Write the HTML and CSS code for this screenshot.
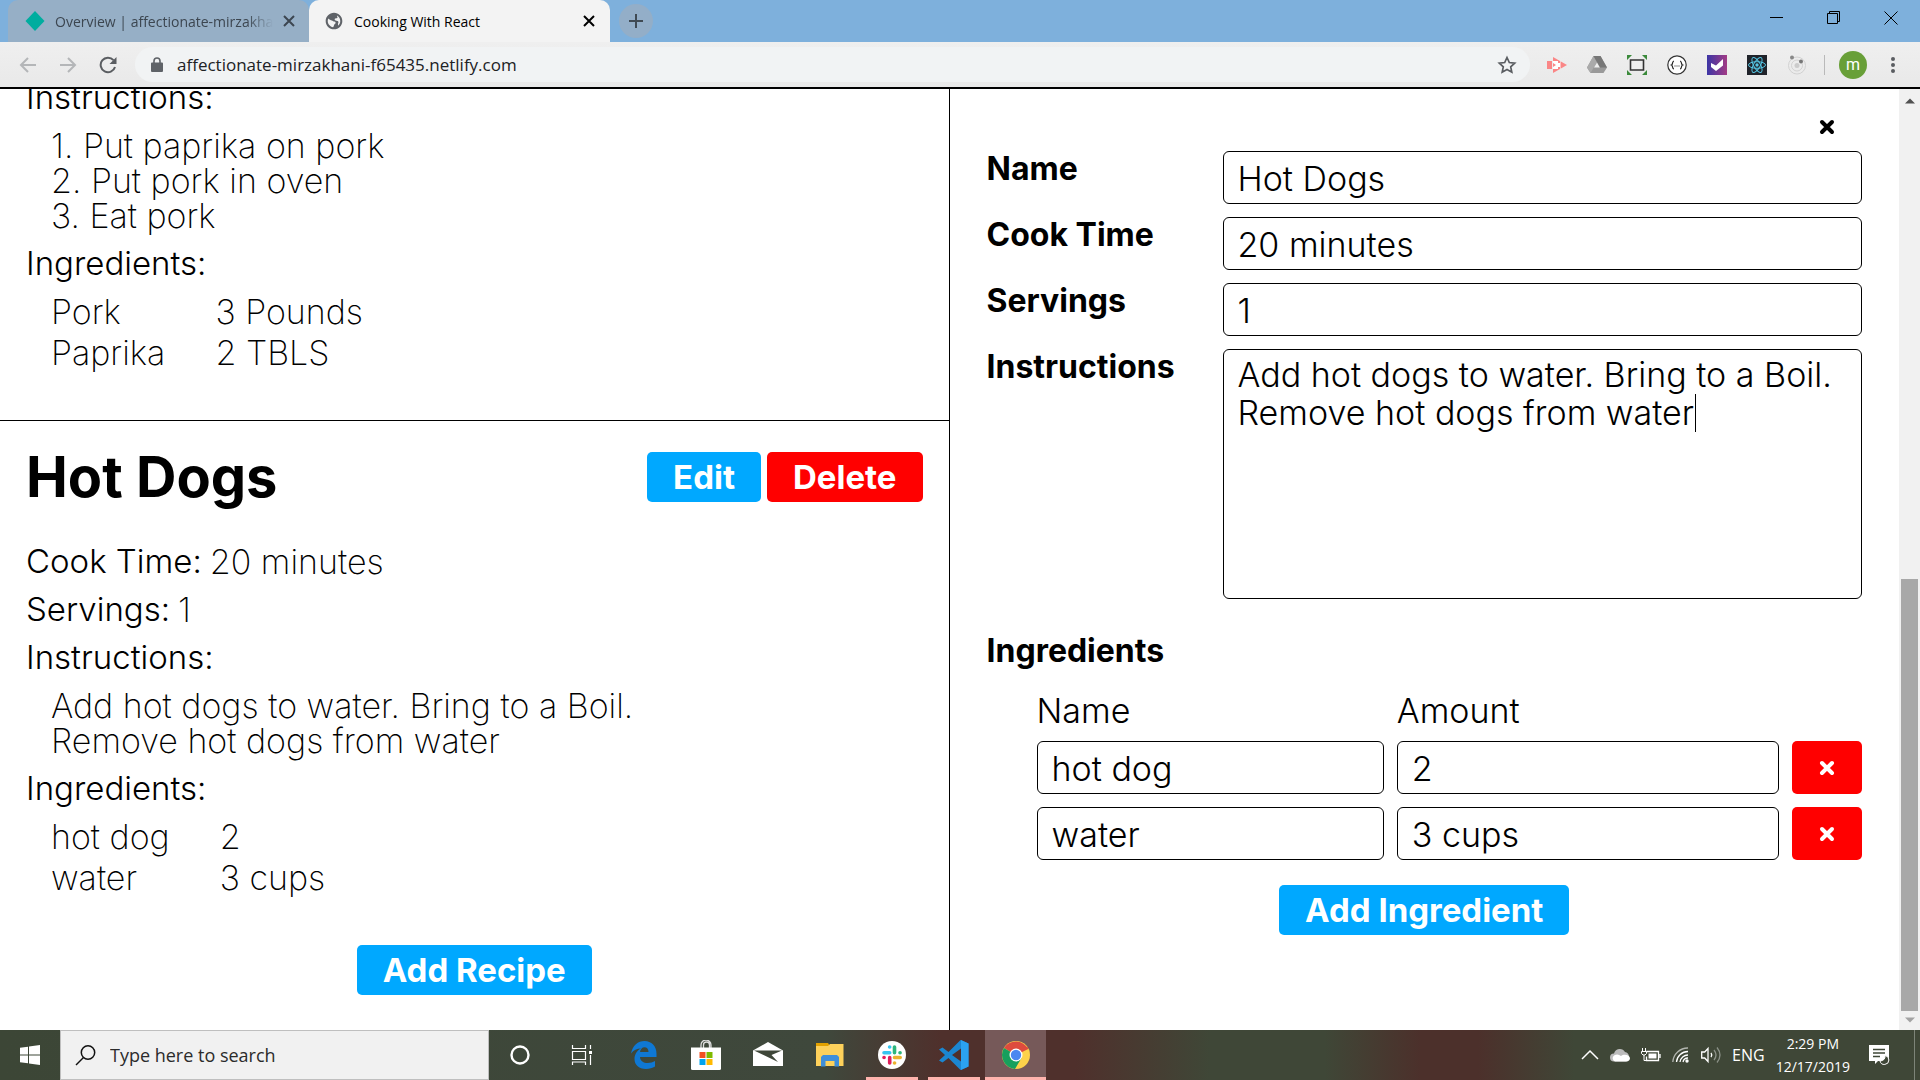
FILE: index.html
```html
<!DOCTYPE html>
<html lang="en">
<head>
<meta charset="utf-8">
<title>Cooking With React</title>
<link rel="stylesheet" href="styles.css">
</head>
<body>
<div class="screen">
  <header class="tabstrip">
    <button class="tab" type="button">
      <svg class="favicon" viewBox="0 0 20 20"><path d="M10 0l9.500 10L10 20 .5 10z" fill="#00ad9f"/></svg>
      <span class="tab-title tab-title-fade">Overview | affectionate-mirzakhani</span>
      <svg class="tab-close" viewBox="0 0 12 12"><path d="M1 1l10 10M11 1L1 11" stroke="currentColor" stroke-width="2"/></svg>
    </button>
    <button class="tab tab-active" type="button">
      <svg class="favicon" viewBox="0 0 24 24"><path fill="#5f6368" d="M12 2C6.480 2 2 6.480 2 12s4.480 10 10 10 10-4.480 10-10S17.520 2 12 2zM4.500 12c0-1 .2-2 .6-2.900C6.500 10.500 8 11 9.500 11.500c1 .3 1.200 1 2.200 1.200 1 .2 2.200.2 2.200 1.300 0 1.200-1.200 1.500-1.700 2.500-.4.900-.2 2-1.300 2.900C7.300 18.900 4.500 15.800 4.500 12zm12.300 5.700c.3-1.300-.3-2.200.3-3.200.5-.9.300-1.700-.6-2.400-.8-.6-2.200-.4-3.200-1.100-.8-.6-.6-1.600.2-2 1.100-.5 2.600.2 2.700-1.200.1-1-.9-1.300-.6-2.300 2.300 1.200 3.900 3.700 3.900 6.500 0 2.300-1 4.300-2.700 5.700z"/></svg>
      <span class="tab-title">Cooking With React</span>
      <svg class="tab-close" viewBox="0 0 12 12"><path d="M1 1l10 10M11 1L1 11" stroke="currentColor" stroke-width="2"/></svg>
    </button>
    <button class="new-tab" type="button" aria-label="New tab"><svg width="16" height="16" viewBox="0 0 16 16"><path d="M8 1v14M1 8h14" stroke="#3f4a54" stroke-width="2"/></svg></button>
    <div class="window-controls">
      <button type="button" aria-label="Minimize"><svg width="14" height="14" viewBox="0 0 14 14"><path d="M0 6.500h13" stroke="#000"/></svg></button>
      <button type="button" aria-label="Restore"><svg width="14" height="14" viewBox="0 0 14 14"><path d="M.5 2.500h10v10H.5zM2.500 2.500v-2h10v10h-2" fill="none" stroke="#000"/></svg></button>
      <button type="button" aria-label="Close"><svg width="14" height="14" viewBox="0 0 14 14"><path d="M.5.5l13 13M13.500.5l-13 13" stroke="#000"/></svg></button>
    </div>
  </header>

  <nav class="toolbar">
    <button class="nav-button" type="button" aria-label="Back"><svg width="18" height="18" viewBox="0 0 18 18"><path d="M17 9H2M9 2L2 9l7 7" fill="none" stroke="#b4b6b8" stroke-width="2"/></svg></button>
    <button class="nav-button" type="button" aria-label="Forward"><svg width="18" height="18" viewBox="0 0 18 18"><path d="M1 9h15M9 2l7 7-7 7" fill="none" stroke="#b4b6b8" stroke-width="2"/></svg></button>
    <button class="nav-button" type="button" aria-label="Reload"><svg width="18" height="18" viewBox="0 0 18 18"><path d="M14.500 4.200A7.300 7.300 0 1 0 16 11" fill="none" stroke="#5a5d61" stroke-width="2"/><path d="M17.500 1v7h-7z" fill="#5a5d61"/></svg></button>
    <div class="omnibox">
      <svg width="12" height="16" viewBox="0 0 12 16"><path d="M1 5.500h10a1 1 0 0 1 1 1V14a1 1 0 0 1-1 1H1a1 1 0 0 1-1-1V6.500a1 1 0 0 1 1-1z" fill="#5f6368"/><path d="M3 6V4a3 3 0 0 1 6 0v2" fill="none" stroke="#5f6368" stroke-width="1.600"/></svg>
      <input class="url" type="text" aria-label="Address" value="affectionate-mirzakhani-f65435.netlify.com">
      <svg width="20" height="20" viewBox="0 0 20 20"><path d="M10 2.500l2.300 5 5.400.6-4 3.700 1.100 5.400L10 14.500l-4.800 2.700 1.100-5.400-4-3.700 5.400-.6z" fill="none" stroke="#5a5d61" stroke-width="1.700"/></svg>
    </div>
    <div class="extensions">
      <button type="button" aria-label="Screen recorder"><svg width="20" height="20" viewBox="0 0 20 20"><path d="M0 6h5v8H0zM6 2l14 8-14 8z" fill="#fa8686"/><path d="M6 6h7.500v8H6z" fill="#fff"/><path d="M6 8l3 2-3 2zM11 6h2v2h-2zM11 12h2v2h-2z" fill="#fa8686"/></svg></button>
      <button type="button" aria-label="Drive"><svg width="20" height="20" viewBox="0 0 20 20"><path d="M6.500 1h7L20 12.500 16.500 18h-13L0 12.500z" fill="#999"/><path d="M6.500 1L0 12.500 3.500 18 10 7z" fill="#aaa"/><path d="M13.500 1H6.500l6.500 11.500h7z" fill="#777"/><path d="M10 7.500l2.800 5H7z" fill="#eee"/></svg></button>
      <button type="button" aria-label="Full page capture"><svg width="20" height="20" viewBox="0 0 20 20"><path d="M0 0h5L0 5zM20 0v5l-5-5zM0 20v-5l5 5zM20 20h-5l5-5z" fill="#3b8a3b"/><path d="M3.500 5h13v10h-13z" fill="#eee" stroke="#333" stroke-width="1.600"/></svg></button>
      <button type="button" aria-label="JSON viewer"><svg width="20" height="20" viewBox="0 0 20 20"><circle cx="10" cy="10" r="9.200" fill="#fff" stroke="#333" stroke-width="1.200"/><path d="M7 6c-2 0-1 3.500-2.500 4C6 10.500 5 14 7 14M13 6c2 0 1 3.500 2.500 4-1.500.5-.5 4-2.500 4M7.500 11h1m1 0h1m1 0h1" fill="none" stroke="#222" stroke-width="1.200"/></svg></button>
      <button type="button" aria-label="Tasks"><svg width="20" height="20" viewBox="0 0 20 20"><defs><linearGradient id="pv"><stop stop-color="#3c35a5"/><stop offset="1" stop-color="#a23b85"/></linearGradient></defs><path d="M0 0h20v20H0z" fill="url(#pv)"/><path d="M4 8l5 2.500L16 4v6.500L9 16l-5-4z" fill="#fff"/></svg></button>
      <button type="button" aria-label="React tools"><svg width="20" height="20" viewBox="0 0 20 20"><path d="M0 0h20v20H0z" fill="#20232a"/><g fill="none" stroke="#55c5e3"><ellipse cx="10" cy="10" rx="8.500" ry="3.300"/><ellipse cx="10" cy="10" rx="8.500" ry="3.300" transform="rotate(60 10 10)"/><ellipse cx="10" cy="10" rx="8.500" ry="3.300" transform="rotate(120 10 10)"/></g><circle cx="10" cy="10" r="1.700" fill="#55c5e3"/></svg></button>
      <button type="button" aria-label="Orbit"><svg width="20" height="20" viewBox="0 0 20 20"><circle cx="10" cy="10.500" r="8.500" fill="none" stroke="#d2d2d2"/><circle cx="10" cy="10.500" r="5.500" fill="none" stroke="#d2d2d2"/><circle cx="10" cy="10.500" r="2.500" fill="#ccc"/><circle cx="5" cy="2.500" r="2" fill="#888"/><circle cx="14" cy="6.500" r="2" fill="#777"/></svg></button>
    </div>
    <span class="toolbar-divider"></span>
    <button class="avatar" type="button">m</button>
    <button class="menu" type="button" aria-label="Menu"><svg width="4" height="16" viewBox="0 0 4 16"><g fill="#5a5d61"><circle cx="2" cy="2" r="2"/><circle cx="2" cy="8" r="2"/><circle cx="2" cy="14" r="2"/></g></svg></button>
  </nav>

  <main class="app">
    <section class="recipe-list">
      <article class="recipe">
        <div class="recipe-body">
          <h3 class="term">Instructions:</h3>
          <p class="instructions">1. Put paprika on pork<br>2. Put pork in oven<br>3. Eat pork</p>
          <h3 class="term">Ingredients:</h3>
          <table class="ingredients">
            <tr><td>Pork</td><td>3 Pounds</td></tr>
            <tr><td>Paprika</td><td>2 TBLS</td></tr>
          </table>
        </div>
      </article>
      <article class="recipe">
        <div class="recipe-header">
          <h2 class="recipe-title">Hot Dogs</h2>
          <div class="recipe-actions">
            <button class="btn btn-primary" type="button">Edit</button>
            <button class="btn btn-danger" type="button">Delete</button>
          </div>
        </div>
        <div class="recipe-body">
          <p class="fact"><span class="term">Cook Time:</span><span>20 minutes</span></p>
          <p class="fact"><span class="term">Servings:</span><span>1</span></p>
          <h3 class="term">Instructions:</h3>
          <p class="instructions">Add hot dogs to water. Bring to a Boil.<br>Remove hot dogs from water</p>
          <h3 class="term">Ingredients:</h3>
          <table class="ingredients">
            <tr><td>hot dog</td><td>2</td></tr>
            <tr><td>water</td><td>3 cups</td></tr>
          </table>
        </div>
      </article>
      <div class="list-footer"><button class="btn btn-primary" type="button">Add Recipe</button></div>
    </section>

    <form class="editor">
      <div class="editor-top"><button class="editor-close" type="button" aria-label="Close editor"><svg width="16" height="16" viewBox="0 0 16 16"><path d="M3 3l10 10M13 3L3 13" stroke="currentColor" stroke-width="4" stroke-linecap="round"/></svg></button></div>
      <div class="fields">
        <label for="name">Name</label>
        <input class="box" id="name" type="text" value="Hot Dogs">
        <label for="cook">Cook Time</label>
        <input class="box" id="cook" type="text" value="20 minutes">
        <label for="servings">Servings</label>
        <input class="box" id="servings" type="text" value="1">
        <label for="instructions">Instructions</label>
        <div class="area">
          <textarea class="box" id="instructions">Add hot dogs to water. Bring to a Boil.
Remove hot dogs from water</textarea>
          <span class="caret"></span>
        </div>
      </div>
      <h3 class="editor-heading">Ingredients</h3>
      <div class="ingredient-grid">
        <span>Name</span><span>Amount</span><span></span>
        <input class="box" type="text" aria-label="Ingredient name" value="hot dog">
        <input class="box" type="text" aria-label="Ingredient amount" value="2">
        <button class="remove" type="button" aria-label="Remove hot dog"><svg width="16" height="16" viewBox="0 0 16 16"><path d="M3 3l10 10M13 3L3 13" stroke="currentColor" stroke-width="4" stroke-linecap="round"/></svg></button>
        <input class="box" type="text" aria-label="Ingredient name" value="water">
        <input class="box" type="text" aria-label="Ingredient amount" value="3 cups">
        <button class="remove" type="button" aria-label="Remove water"><svg width="16" height="16" viewBox="0 0 16 16"><path d="M3 3l10 10M13 3L3 13" stroke="currentColor" stroke-width="4" stroke-linecap="round"/></svg></button>
      </div>
      <div class="editor-footer"><button class="btn btn-primary" type="button">Add Ingredient</button></div>
    </form>

    <div class="scrollbar">
      <svg width="10" height="6" viewBox="0 0 10 6"><path d="M0 5.500L5 .5l5 5z" fill="#505050"/></svg>
      <div class="scroll-track"><div class="scroll-thumb"></div></div>
      <svg width="10" height="6" viewBox="0 0 10 6"><path d="M0 .5l5 5 5-5z" fill="#a3a3a3"/></svg>
    </div>
  </main>

  <footer class="taskbar">
    <button class="start" type="button" aria-label="Start"><svg width="20" height="20" viewBox="0 0 20 20"><path d="M0 2.800L8 1.700V9.500H0zM9 1.500L20 0v9.500H9zM0 10.500h8v7.800L0 17.200zM9 10.500h11V20L9 18.500z" fill="#fff"/></svg></button>
    <label class="search">
      <svg width="21" height="21" viewBox="0 0 21 21"><circle cx="13" cy="7.500" r="6.700" fill="none" stroke="#111" stroke-width="1.500"/><path d="M8.500 12.500L1 20" stroke="#111" stroke-width="1.500"/></svg>
      <input type="text" aria-label="Search" placeholder="Type here to search">
    </label>
    <div class="apps">
      <button type="button" aria-label="Cortana"><svg width="22" height="22" viewBox="0 0 22 22"><circle cx="11" cy="11" r="8.500" fill="none" stroke="#fff" stroke-width="2.400"/></svg></button>
      <button type="button" aria-label="Task view"><svg width="22" height="22" viewBox="0 0 22 22"><path d="M1.500 1v3.500h13V1M1.500 7.500h13v8h-13zM1.500 21v-3h13v3M19.500 1v4M19.500 11v10" fill="none" stroke="#fff" stroke-width="1.200"/><path d="M18 7h3v3h-3z" fill="#fff"/></svg></button>
      <button type="button" aria-label="Edge"><svg width="26" height="28" viewBox="0 0 26 28"><path d="M0 12.500C1.500 4.500 7 0 13.500 0 20.500 0 25.500 5 25.500 12.500V16H9c.3 4 3.600 6 7.500 6 3 0 5.500-.8 7.500-2v5.500C21.500 27 18.500 28 15 28 7.500 28 3.500 23.500 3.500 18c0-4.500 2.500-8.500 6.500-10.500-4 .2-7.500 1.500-10 5zm9-1.500h8.500c0-3-1.500-4.800-4-4.800S9.300 8.300 9 11z" fill="#0f78d4"/></svg></button>
      <button type="button" aria-label="Store"><svg width="30" height="30" viewBox="0 0 30 30"><path d="M10 8V5a4 4 0 0 1 10 0v3M12.500 8V5a3 3 0 0 1 6 0v3" fill="none" stroke="#ddd" stroke-width="1.300"/><path d="M0 7.500h30V28.500a1.500 1.500 0 0 1-1.500 1.500h-27A1.500 1.500 0 0 1 0 28.500z" fill="#fff"/><path d="M8.500 12h6v6h-6z" fill="#f25022"/><path d="M15.500 12h6v6h-6z" fill="#7fba00"/><path d="M8.500 19h6v6h-6z" fill="#00a4ef"/><path d="M15.500 19h6v6h-6z" fill="#ffb900"/></svg></button>
      <button type="button" aria-label="Mail"><svg width="30" height="26" viewBox="0 0 30 26"><path d="M0 8.500L15 0l15 8.500V24H0z" fill="#fff"/><path d="M1 8.500h28L18.500 13l6.500 7z" fill="#3e4638"/></svg></button>
      <button type="button" aria-label="File Explorer"><svg width="28" height="24" viewBox="0 0 28 24"><path d="M0 0h12l2 3H0z" fill="#e2a100"/><path d="M0 3h12l2-2h13.500v22H0z" fill="#fdd15b"/><path d="M5 23v-9l2-2h14l2 2v9.500h-4.500V18h-9v5.500H5z" fill="#3f8fd9"/></svg></button>
      <button class="running" type="button" aria-label="Slack"><svg width="28" height="28" viewBox="0 0 28 28"><circle cx="14" cy="14" r="14" fill="#fff"/><g stroke-width="3.600" stroke-linecap="round"><path d="M6 11.700h5.700M11.600 6h.1" stroke="#36c5f0"/><path d="M16.500 6v5.700M22 11.700h.1" stroke="#2eb67d"/><path d="M16.500 16.500h5.700M16.500 22h.1" stroke="#ecb22e"/><path d="M11.700 16.500V22M6 16.500h.1" stroke="#e01e5a"/></g></svg></button>
      <button class="running" type="button" aria-label="VS Code"><svg width="30" height="30" viewBox="0 0 30 30"><path d="M21.500 0L9.500 12 3.500 7.500 0 9.500 6 15l-6 5.500 3.500 2L9.500 18l12 12 8-3.500v-23zM22 8.500v13L13 15z" fill="#1b86d1" fill-rule="evenodd"/><path d="M22 0l7.500 3.500v23L22 30z" fill="#2ba2f0"/></svg></button>
      <button class="running current" type="button" aria-label="Chrome"><svg width="28" height="28" viewBox="0 0 28 28"><circle cx="14" cy="14" r="14" fill="#fdd24b"/><path d="M14 14L2 7a14 14 0 0 1 24.200 1z" fill="#dd4b3e"/><path d="M14 14L1.900 7A14 14 0 0 0 13 28l6.500-11z" fill="#17a05d"/><path d="M14 8h12.500l-1-2L14 7z" fill="#dd4b3e"/><circle cx="14" cy="14" r="6.500" fill="#fff"/><circle cx="14" cy="14" r="5.200" fill="#4a87f0"/></svg></button>
    </div>
    <div class="tray">
      <svg width="18" height="30" viewBox="0 0 18 30"><path d="M1 19l8-8 8 8" fill="none" stroke="#fff" stroke-width="1.500"/></svg>
      <svg width="20" height="14" viewBox="0 0 20 14"><path d="M4 13.500a4 4 0 0 1 0-8 6 6 0 0 1 11-1.500 5 5 0 0 1 1 9.500z" fill="#bbb"/><path d="M5 13.500a3.500 3.500 0 0 1-1-6c3-2 5-1 7 .5 2-2 8-2 9 2a3.500 3.500 0 0 1-3 3.500z" fill="#fff"/></svg>
      <svg width="20" height="14" viewBox="0 0 20 14"><path d="M5.500 3.500h12v9h-12v-4M19 6v4" fill="none" stroke="#fff" stroke-width="1.300"/><path d="M7.500 5.500h8v5h-8z" fill="#fff"/><path d="M1.500 0v3M4.500 0v3M.5 3.500h5v2l-1.500 1.500h-2L.5 5.500zM3 7v5.500h3" fill="none" stroke="#fff"/></svg>
      <svg width="18" height="18" viewBox="0 0 18 18"><g fill="none" stroke="#fff" stroke-width="1.300"><path d="M.8 16A15 15 0 0 1 16 2" opacity=".6"/><path d="M4.500 16A11.500 11.500 0 0 1 16 5.500M8 16a8 8 0 0 1 8-7"/><path d="M11 16a5 5 0 0 1 5-4"/></g><circle cx="15" cy="15" r="1.700" fill="#fff"/></svg>
      <svg width="20" height="18" viewBox="0 0 20 18"><path d="M.7 6h3L7 2.500v13L3.700 12h-3z" fill="none" stroke="#fff" stroke-width="1.300"/><path d="M10 7q1.500 2 0 4" fill="none" stroke="#fff" stroke-width="1.300"/><path d="M13 4q4 5 0 10M16 1.500q6 7.500 0 15" fill="none" stroke="#8b9188" stroke-width="1.300"/></svg>
      <span class="lang">ENG</span>
      <div class="clock"><span>2:29 PM</span><span>12/17/2019</span></div>
      <svg class="notice" width="21" height="21" viewBox="0 0 21 21"><path d="M0 0h20v16H9l-3 3v-3H0z" fill="#fff"/><path d="M4 4.500h12M4 8h12M4 11.500h7" stroke="#3f4737" stroke-width="1.300"/><path d="M16 10.500q.5 5-5 5.500a4.500 4.500 0 1 0 5-5.500z" fill="#3f4737" stroke="#fff"/></svg>
      <span class="show-desktop"></span>
    </div>
  </footer>
</div>
</body>
</html>
```
FILE: styles.css
```css
* { box-sizing: border-box; }

body {
  margin: 0;
  font-family: "Open Sans", "Noto Sans", sans-serif;
  color: #000;
}

button, input, textarea {
  margin: 0;
  padding: 0;
  border: 0;
  background: none;
  font: inherit;
  color: inherit;
}

button { display: flex; align-items: center; justify-content: center; }
input, textarea { outline: 0; min-width: 0; }
svg { display: block; flex: none; }
h2, h3, p { margin: 0; }

.screen {
  display: flex;
  flex-direction: column;
  height: 100vh;
  overflow: hidden;
}

/* Browser tabs */
.tabstrip {
  display: flex;
  flex: none;
  height: 42px;
  padding: 0 1px 0 8px;
  background: #7eb0dc;
}

.tab {
  flex: none;
  width: 301px;
  gap: 10px;
  padding: 0 14px 0 17px;
  border-radius: 10px 10px 0 0;
  background: #96afc6;
  color: #3c4650;
  font-size: 14px;
}

.tab-active { padding: 0 15px; background: #f3f3f3; color: #000; }
.favicon { width: 20px; height: 20px; }
.tab-title { flex: 1; overflow: hidden; white-space: nowrap; text-align: left; }
.tab-title-fade { mask-image: linear-gradient(90deg, #000 88%, transparent); }
.tab-close { width: 12px; height: 12px; }

.new-tab {
  width: 34px;
  height: 34px;
  margin: 4px 0 0 9px;
  border-radius: 50%;
  background: #93aec8;
}

.window-controls { display: flex; margin-left: auto; height: 36px; }
.window-controls button { width: 57px; }

/* Address bar */
.toolbar {
  display: flex;
  flex: none;
  align-items: center;
  height: 47px;
  padding: 0 25px 0 8px;
  border-bottom: 2px solid #000;
  background: linear-gradient(#efefef, #e9e9e9);
}

.nav-button { width: 40px; height: 40px; }

.omnibox {
  display: flex;
  flex: 1;
  align-items: center;
  height: 35px;
  margin-left: 7px;
  padding: 0 13px 0 16px;
  border-radius: 18px;
  background: #f1f3f4;
}

.url { flex: 1; margin-left: 14px; color: #202124; font-size: 17px; }

.extensions { display: flex; margin-left: 7px; }
.extensions button { width: 40px; }
.toolbar-divider { width: 1px; height: 20px; margin: 0 14px 0 7px; background: #b9b9b9; }

.avatar {
  width: 28px;
  height: 28px;
  border-radius: 50%;
  background: #689f38;
  color: #fff;
  font: 16px Roboto, sans-serif;
}

.menu { margin-left: 24px; }

/* Recipe application */
.app {
  display: grid;
  flex: 1;
  grid-template-columns: minmax(0, 1fr) minmax(0, 1fr) 21px;
  grid-template-rows: 100%;
  min-height: 0;
  background: #fff;
  font: 300 34px/35px Inter, "Noto Sans", sans-serif;
}

.recipe-list {
  display: flex;
  flex-direction: column;
  justify-content: flex-end;
  overflow: hidden;
  border-right: 1px solid #000;
  font-weight: 200;
}

.recipe { flex: none; padding: 31px 26px 44px; }
.recipe + .recipe { border-top: 1px solid #000; }

.recipe-header {
  display: flex;
  align-items: center;
  justify-content: space-between;
  margin-bottom: 42px;
}

.recipe-title { font-size: 56px; font-weight: 700; line-height: 50px; }
.recipe-actions { display: flex; gap: 6px; }

.btn {
  height: 50px;
  padding: 0 26px;
  border-radius: 5px;
  color: #fff;
  font-size: 33px;
  font-weight: 700;
}

.btn-primary { background: #00a8ff; }
.btn-danger { background: #f00; }

.recipe-body { display: flex; flex-direction: column; gap: 13px; }
.fact { display: flex; gap: 8px; }
.term { font-size: 33px; font-weight: 300; }
.instructions { padding-left: 25px; }

.ingredients { width: max-content; margin-left: 25px; border-spacing: 0; }
.ingredients td { padding: 0 50px 6px 0; }

.list-footer { display: flex; flex: none; justify-content: center; padding-bottom: 35px; }

.editor { padding: 28px 37px; }
.editor-top { display: flex; justify-content: flex-end; }
.editor-close { width: 70px; height: 20px; margin-bottom: 14px; }

.fields {
  display: grid;
  grid-template-columns: 223px 1fr;
  gap: 13px;
}

.fields label { font-size: 32px; font-weight: 700; }

.box {
  width: 100%;
  height: 53px;
  padding: 2px 14px 0;
  border: 1px solid #000;
  border-radius: 6px;
}

.area { position: relative; }
textarea.box {
  display: block;
  height: 250px;
  padding: 6px 14px;
  line-height: 38px;
  resize: none;
  overflow: hidden;
}

.caret {
  position: absolute;
  top: 45px;
  left: 472px;
  width: 1px;
  height: 38px;
  background: #000;
}

.editor-heading { margin: 34px 0 25px; font-size: 32px; font-weight: 700; }

.ingredient-grid {
  display: grid;
  grid-template-columns: 347fr 382fr 70px;
  gap: 13px;
  padding-left: 50px;
}

.remove { border-radius: 5px; background: #f00; color: #fff; }
.editor-footer { display: flex; justify-content: center; margin-top: 25px; }

.scrollbar {
  display: flex;
  flex-direction: column;
  align-items: center;
  padding: 9px 0 7px;
  background: #f1f1f1;
}

.scroll-track { display: flex; flex: 1; align-items: flex-end; padding: 6px 0; }
.scroll-thumb { width: 17px; height: 48%; background: #a8a8a8; }

/* Desktop taskbar */
.taskbar {
  display: flex;
  flex: none;
  height: 50px;
  background: linear-gradient(90deg, #3c4636 0, #3f483c 43%, #4f302c 49%, #4f302c 56%, #3f4737 63%, #3f4737 69%, #4c302b 74%, #4c302b 77%, #3f4737 82%);
  color: #fff;
}

.start { width: 60px; }

.search {
  display: flex;
  align-items: center;
  gap: 14px;
  width: 429px;
  padding: 0 14px;
  border: 1px solid #bfbfbf;
  background: #f1f1f1;
}

.search input { flex: 1; font-size: 18px; }
.search input::placeholder { color: #2b2b2b; opacity: 1; }

.apps { display: flex; }
.apps button { width: 62px; }
.apps .running { width: 52px; margin: 0 5px; border-bottom: 3px solid #ffb3ad; border-top: 3px solid transparent; }
.apps .current { width: 61px; margin: 0; border-top-color: #765959; background: #765959; }

.tray { display: flex; align-items: center; gap: 11px; margin-left: auto; padding-right: 5px; }
.lang { font-size: 16px; }

.clock {
  display: flex;
  flex-direction: column;
  align-items: center;
  font-size: 14px;
  line-height: 23px;
}

.notice { margin-left: 8px; }
.show-desktop { width: 1px; height: 50px; margin-left: 13px; background: #7d8478; }
```
